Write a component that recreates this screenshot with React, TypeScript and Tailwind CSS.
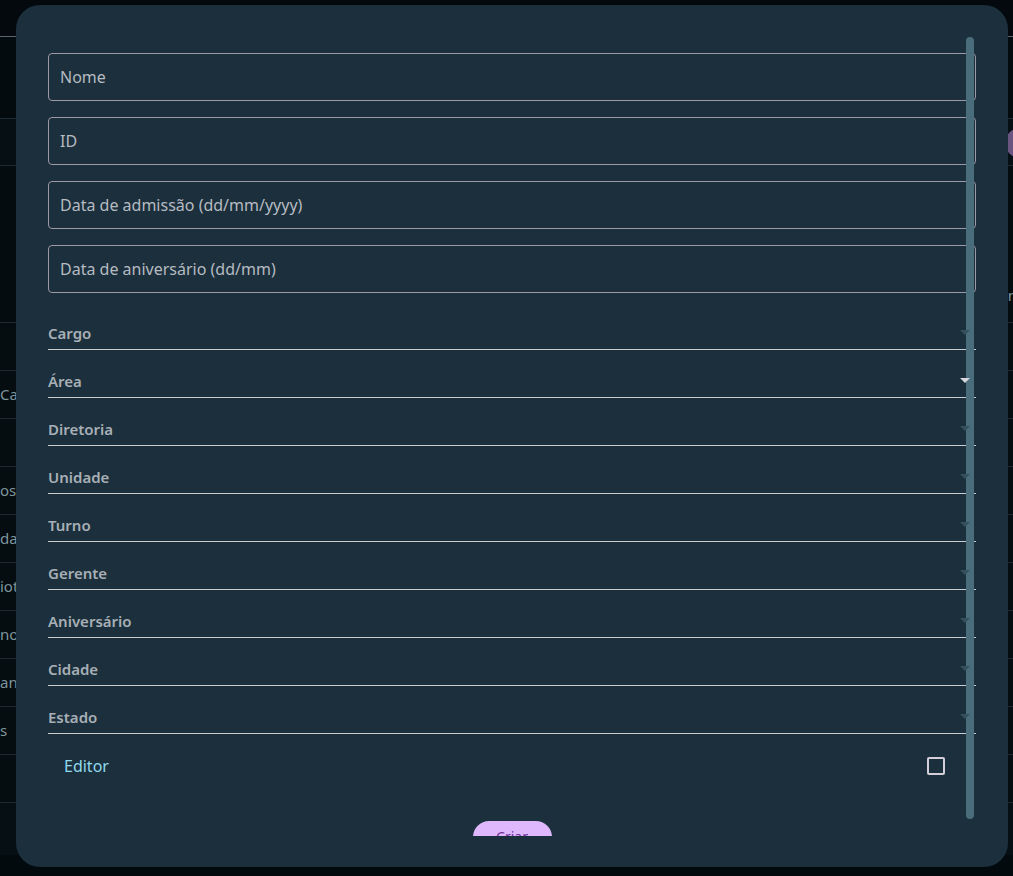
import { useState } from "react";

const textInputs = ["Nome", "ID", "Data de admissão (dd/mm/yyyy)", "Data de aniversário (dd/mm)"];

const selects = [
  { label: "Cargo", active: false },
  { label: "Área", active: true },
  { label: "Diretoria", active: false },
  { label: "Unidade", active: false },
  { label: "Turno", active: false },
  { label: "Gerente", active: false },
  { label: "Aniversário", active: false },
  { label: "Cidade", active: false },
  { label: "Estado", active: false },
];

// linhas da tabela que fica atrás do modal
const bgRows = ["", "Canal", "", "os Internos", "da", "iot", "no", "ane", "s", ""];

function Background() {
  return (
    <div className="min-h-screen bg-[#03090c] text-[15px] text-[#7f959c] flex flex-col">
      <div className="h-[37px] border-b border-[#5c666b]" />
      <div className="h-[82px] border-b border-[#1d2a30] bg-[#040b0e]" />
      <div className="h-[47px] border-b border-[#1d2a30] bg-[#061014]" />
      <div className="h-[157px] bg-[#050c10] border-b border-[#1d2a30] flex items-end justify-end pb-[16px]">
        <span className="-mr-[4px]">n</span>
      </div>
      {bgRows.map((t, i) => (
        <div key={i} className="h-[48px] border-b border-[#1d2a30] bg-[#050d11] flex items-center">
          <span className="whitespace-nowrap">{t}</span>
        </div>
      ))}
      <div className="h-[52px] bg-[#060f13]" />
      <div className="flex-1 bg-[#020a0d]" />
    </div>
  );
}

function SelectRow({ label, active }: { label: string; active: boolean }) {
  return (
    <div className="h-[48px] border-b border-[#c9cdd1] flex items-end justify-between pb-[6px]">
      <span className="font-semibold text-[15px] text-[#a8afb6] leading-[20px]">{label}</span>
      <svg width="10" height="6" viewBox="0 0 10 6" className="mb-[7px] mr-[6px] relative z-10">
        <path d="M0 0h10L5 5z" fill={active ? "#d6d6dc" : "#34505c"} />
      </svg>
    </div>
  );
}

export default function App() {
  const [editor, setEditor] = useState(false);
  return (
    <div className="relative font-['Noto_Sans','Open_Sans',sans-serif]">
      <Background />
      <div className="absolute left-[1005px] top-[128px] w-[30px] h-[30px] rounded-full bg-[#6a5480]" />

      <div className="absolute left-[16px] top-[5px] w-[992px] h-[862px] rounded-[24px] bg-[#1b303c] pt-[32px] pb-[31px]">
        <div className="relative h-full overflow-hidden">
          <div className="px-[32px] pt-[16px] flex flex-col">
            <div className="flex flex-col gap-[16px]">
              {textInputs.map((p) => (
                <div key={p} className="h-[48px] rounded-[4px] border border-[#9d99a5] flex items-center px-[11px]">
                  <span className="text-[16px] text-[#b6bac1]">{p}</span>
                </div>
              ))}
            </div>
            <div className="mt-[9px] flex flex-col">
              {selects.map((s) => (
                <SelectRow key={s.label} label={s.label} active={s.active} />
              ))}
            </div>
            <div className="h-[64px] flex items-center justify-between pl-[16px] pr-[31px]">
              <span className="text-[16px] text-[#91d9ef]">Editor</span>
              <button
                onClick={() => setEditor(!editor)}
                className="w-[18px] h-[18px] rounded-[2px] border-2 border-[#d3cfd8]"
              />
            </div>
            <div className="flex justify-center pt-[23px]">
              <button className="w-[79px] h-[32px] rounded-full bg-[#dfb7fd] text-[#6a2c92] text-[14px] leading-[32px]">
                Criar
              </button>
            </div>
          </div>
          <div className="absolute left-[950px] top-0 w-[8px] h-[782px] rounded-full bg-[#4a6d7b]" />
        </div>
      </div>
    </div>
  );
}
